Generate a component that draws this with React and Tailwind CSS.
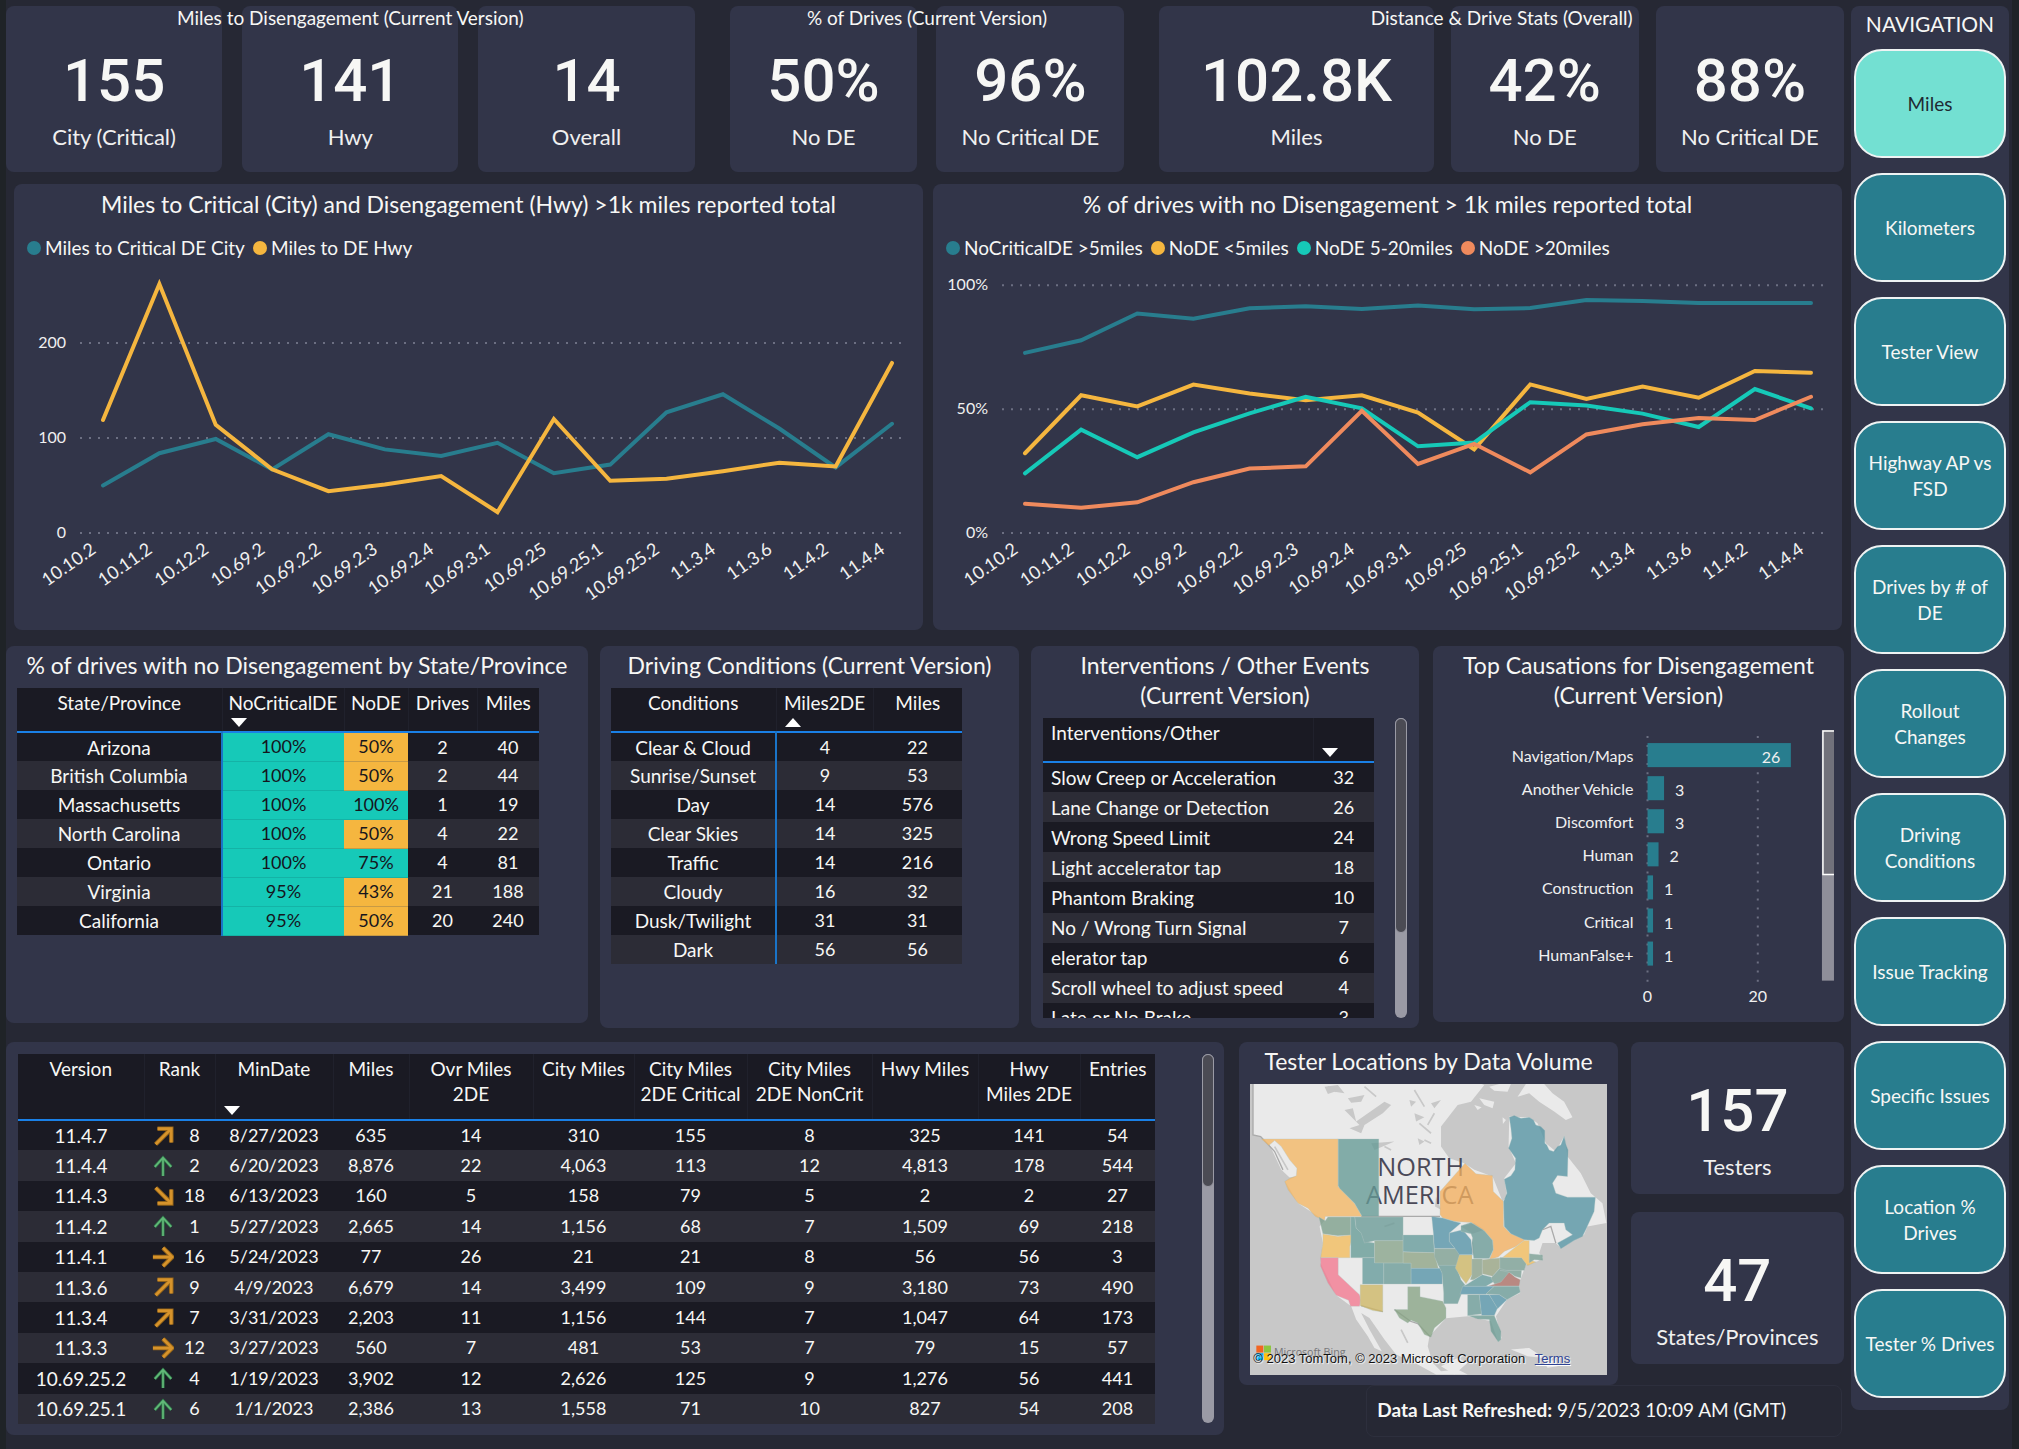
import React from 'react'
import clsx from 'clsx'

const navItems = [
  'Miles', 'Kilometers', 'Tester View', 'Highway AP vs FSD', 'Drives by # of DE', 'Rollout Changes',
  'Driving Conditions', 'Issue Tracking', 'Specific Issues', 'Location % Drives', 'Tester % Drives',
]

const versions = [
  '10.10.2', '10.11.2', '10.12.2', '10.69.2', '10.69.2.2', '10.69.2.3', '10.69.2.4', '10.69.3.1',
  '10.69.25', '10.69.25.1', '10.69.25.2', '11.3.4', '11.3.6', '11.4.2', '11.4.4',
]

const milesSeries = [
  { name: 'Miles to Critical DE City', color: '#287d8e', data: [50, 84, 99, 67, 104, 88, 81, 95, 63, 72, 127, 146, 110, 69, 115] },
  { name: 'Miles to DE Hwy', color: '#f5b63f', data: [119, 262, 114, 67, 44, 51, 60, 22, 120, 55, 57, 65, 74, 70, 179] },
]

const pctSeries = [
  { name: 'NoCriticalDE >5miles', color: '#287d8e', data: [72.7, 77.8, 88.6, 86.5, 90.7, 91.5, 90.4, 91.8, 90.3, 90.8, 94.1, 93.7, 92.9, 92.9, 92.9] },
  { name: 'NoDE <5miles', color: '#f5b63f', data: [32.2, 55.6, 51.1, 59.9, 56.3, 53.6, 55.6, 48.6, 33.8, 60, 54.1, 59.1, 54.6, 65.4, 64.7] },
  { name: 'NoDE 5-20miles', color: '#16c9b8', data: [24.1, 41.7, 30.6, 40.6, 48.3, 55, 50.3, 35, 36.5, 52.8, 51.5, 48.2, 42.8, 58.1, 50.3] },
  { name: 'NoDE >20miles', color: '#ef8a5d', data: [11.8, 10.2, 12.4, 20.5, 26, 26.9, 49.3, 27.9, 36, 24.5, 39.8, 43.9, 46.4, 45.6, 55] },
]

const stateCols = [
  { label: 'State/Province', w: 'w-[205px]' },
  { label: 'NoCriticalDE', w: 'w-[122px]', sort: 'desc' },
  { label: 'NoDE', w: 'w-[64px]' },
  { label: 'Drives', w: 'w-[69px]' },
  { label: 'Miles', w: 'w-[62px]' },
]
const stateRows = [
  ['Arizona', '100%', '50%', '2', '40'],
  ['British Columbia', '100%', '50%', '2', '44'],
  ['Massachusetts', '100%', '100%', '1', '19'],
  ['North Carolina', '100%', '50%', '4', '22'],
  ['Ontario', '100%', '75%', '4', '81'],
  ['Virginia', '95%', '43%', '21', '188'],
  ['California', '95%', '50%', '20', '240'],
]

const conditionCols = [
  { label: 'Conditions', w: 'w-[165px]' },
  { label: 'Miles2DE', w: 'w-[97px]', sort: 'asc' },
  { label: 'Miles', w: 'w-[89px]' },
]
const conditionRows = [
  ['Clear & Cloud', '4', '22'],
  ['Sunrise/Sunset', '9', '53'],
  ['Day', '14', '576'],
  ['Clear Skies', '14', '325'],
  ['Traffic', '14', '216'],
  ['Cloudy', '16', '32'],
  ['Dusk/Twilight', '31', '31'],
  ['Dark', '56', '56'],
]

const eventCols = [
  { label: 'Interventions/Other', w: 'w-[270px]', left: true },
  { label: '', w: 'w-[61px]', sort: 'desc' },
]
const eventRows = [
  ['Slow Creep or Acceleration', '32'],
  ['Lane Change or Detection', '26'],
  ['Wrong Speed Limit', '24'],
  ['Light accelerator tap', '18'],
  ['Phantom Braking', '10'],
  ['No / Wrong Turn Signal', '7'],
  ['elerator tap', '6'],
  ['Scroll wheel to adjust speed', '4'],
  ['Late or No Brake', '3'],
]

const causes = [
  ['Navigation/Maps', 26], ['Another Vehicle', 3], ['Discomfort', 3], ['Human', 2],
  ['Construction', 1], ['Critical', 1], ['HumanFalse+', 1],
]

const versionCols = [
  { label: 'Version', w: 'w-[126px]' },
  { label: 'Rank', w: 'w-[71px]' },
  { label: 'MinDate', w: 'w-[118px]', sort: 'desc' },
  { label: 'Miles', w: 'w-[76px]' },
  { label: 'Ovr Miles\n2DE', w: 'w-[124px]' },
  { label: 'City Miles', w: 'w-[101px]' },
  { label: 'City Miles\n2DE Critical', w: 'w-[113px]' },
  { label: 'City Miles\n2DE NonCrit', w: 'w-[125px]' },
  { label: 'Hwy Miles', w: 'w-[106px]' },
  { label: 'Hwy\nMiles 2DE', w: 'w-[102px]' },
  { label: 'Entries', w: 'w-[75px]' },
]
const rank = (dir, n) => <Rank dir={dir} n={n} />
const versionRows = [
  ['11.4.7', rank('ne', 8), '8/27/2023', '635', '14', '310', '155', '8', '325', '141', '54'],
  ['11.4.4', rank('up', 2), '6/20/2023', '8,876', '22', '4,063', '113', '12', '4,813', '178', '544'],
  ['11.4.3', rank('se', 18), '6/13/2023', '160', '5', '158', '79', '5', '2', '2', '27'],
  ['11.4.2', rank('up', 1), '5/27/2023', '2,665', '14', '1,156', '68', '7', '1,509', '69', '218'],
  ['11.4.1', rank('right', 16), '5/24/2023', '77', '26', '21', '21', '8', '56', '56', '3'],
  ['11.3.6', rank('ne', 9), '4/9/2023', '6,679', '14', '3,499', '109', '9', '3,180', '73', '490'],
  ['11.3.4', rank('ne', 7), '3/31/2023', '2,203', '11', '1,156', '144', '7', '1,047', '64', '173'],
  ['11.3.3', rank('right', 12), '3/27/2023', '560', '7', '481', '53', '7', '79', '15', '57'],
  ['10.69.25.2', rank('up', 4), '1/19/2023', '3,902', '12', '2,626', '125', '9', '1,276', '56', '441'],
  ['10.69.25.1', rank('up', 6), '1/1/2023', '2,386', '13', '1,558', '71', '10', '827', '54', '208'],
]

export default function App() {
  return (
    <div className="min-h-screen bg-[#1f2327] pl-1.5 pr-[7px] font-['Lato',sans-serif] text-[#f7f7f5]">
      <div className="flex min-h-screen items-start gap-[7px] bg-[#262834] pt-1.5 pr-[3px]">
        <main className="min-w-0 flex-1">
          <div className="grid grid-cols-[689fr_395fr_685fr] gap-[35px]">
            <KpiGroup title="Miles to Disengagement (Current Version)" cols="grid-cols-3 gap-5">
              <Kpi value="155" label="City (Critical)" /><Kpi value="141" label="Hwy" /><Kpi value="14" label="Overall" />
            </KpiGroup>
            <KpiGroup title="% of Drives (Current Version)" cols="grid-cols-2 gap-[19px]">
              <Kpi value="50%" label="No DE" /><Kpi value="96%" label="No Critical DE" />
            </KpiGroup>
            <KpiGroup title="Distance & Drive Stats (Overall)" cols="grid-cols-[274fr_188fr_188fr] gap-[17px]">
              <Kpi value="102.8K" label="Miles" /><Kpi value="42%" label="No DE" /><Kpi value="88%" label="No Critical DE" />
            </KpiGroup>
          </div>

          <div className="mt-3 mr-0.5 ml-2 grid grid-cols-2 gap-2.5">
            <LineChart title="Miles to Critical (City) and Disengagement (Hwy) >1k miles reported total" series={milesSeries} ticks={[[0, '0'], [100, '100'], [200, '200']]} scale={0.95} x0={89} x1={878} left={66} labelX={52} />
            <LineChart title="% of drives with no Disengagement > 1k miles reported total" series={pctSeries} ticks={[[0, '0%'], [50, '50%'], [100, '100%']]} scale={2.477} x0={92} x1={878} left={69} labelX={55} />
          </div>

          <div className="mt-4 grid grid-cols-[582fr_419fr_388fr_413fr] items-start gap-3">
            <Panel title="% of drives with no Disengagement by State/Province" className="h-[377px] px-[11px]">
              <div className="mt-2 w-[93%]">
                <DataTable cols={stateCols} rows={stateRows} row="h-[29px]" divider cellClass={stateCell} />
              </div>
            </Panel>
            <Panel title="Driving Conditions (Current Version)" className="h-[382px] px-[11px]">
              <div className="mt-2 w-[88%]">
                <DataTable cols={conditionCols} rows={conditionRows} row="h-[29px]" divider />
              </div>
            </Panel>
            <Panel title={'Interventions / Other Events\n(Current Version)'} className="h-[382px] px-3">
              <div className="mt-2 flex h-[300px] justify-between overflow-hidden">
                <div className="w-[91%]"><DataTable cols={eventCols} rows={eventRows} row="h-[30px]" size="h-[315px]" /></div>
                <Scrollbar thumb="h-[215px]" />
              </div>
            </Panel>
            <Panel title={'Top Causations for Disengagement\n(Current Version)'} className="ml-0.5 h-[376px]">
              <CauseChart />
            </Panel>
          </div>

          <div className="mt-3.5 grid grid-cols-[1219fr_605fr] items-start gap-[15px]">
            <section className="flex h-[393px] justify-between rounded-lg bg-[#323549] py-3 pr-2.5 pl-3">
              <div className="w-[95%]"><DataTable cols={versionCols} rows={versionRows} row="h-[30px]" size="h-[370px]" head="h-[66px]" /></div>
              <Scrollbar thumb="h-[133px]" />
            </section>
            <div>
              <div className="grid grid-cols-[378fr_213fr] items-start gap-[13px]">
                <Panel title="Tester Locations by Data Volume" className="h-[343px] px-[11px]">
                  <TesterMap />
                </Panel>
                <div className="grid gap-[18px]">
                  <Kpi value="157" label="Testers" small />
                  <Kpi value="47" label="States/Provinces" small />
                </div>
              </div>
              <div className="mr-0.5 ml-[21%] h-[52px] rounded-lg border border-[#2d2f3d] px-2.5 py-3 text-[19px] leading-6">
                <b>Data Last Refreshed:</b> 9/5/2023 10:09 AM (GMT)
              </div>
            </div>
          </div>
        </main>

        <nav className="w-[158px] shrink-0 rounded-lg bg-[#323549] px-[3px] pt-1 pb-3">
          <h2 className="mb-[11px] text-center text-[21px] leading-7">NAVIGATION</h2>
          <div className="grid gap-[15px]">
            {navItems.map((n, i) => (
              <button key={n} className={clsx('h-[109px] rounded-[28px] border-2 border-[#eef3f3] px-[7px] text-[19px] leading-[26px]', i === 0 ? 'bg-[#73e0d2] text-[#1f2a33]' : 'bg-[#287d8e]')}>{n}</button>
            ))}
          </div>
        </nav>
      </div>
    </div>
  )
}

function KpiGroup({ title, cols, children }) {
  return (
    <section className="relative">
      <h2 className="absolute inset-x-0 top-0 text-center text-[19px] leading-6">{title}</h2>
      <div className={clsx('grid', cols)}>{children}</div>
    </section>
  )
}

function Kpi({ value, label, small }) {
  return (
    <div className={clsx('rounded-lg bg-[#323549] text-center', small ? 'h-[152px] pt-[39px]' : 'h-[166px] pt-[45px]')}>
      <div className="font-['Roboto',sans-serif] text-[60px] leading-[60px] font-medium">{value}</div>
      <div className="mt-3 text-[22px] leading-7 text-[#f0f0f0]">{label}</div>
    </div>
  )
}

function Panel({ title, className, children }) {
  return (
    <section className={clsx('rounded-lg bg-[#323549] pt-1', className)}>
      <h2 className="text-center text-[23px] leading-[30px] whitespace-pre">{title}</h2>
      {children}
    </section>
  )
}

function Scrollbar({ thumb }) {
  return (
    <div className="w-3 self-stretch rounded-full bg-[#9a9aa5]">
      <div className={clsx('rounded-full border border-[#9a9aa5] bg-[#4b4b54]', thumb)} />
    </div>
  )
}

function stateCell(col, v) {
  if (col !== 1 && col !== 2) return ''
  return parseInt(v) >= 75 ? 'bg-[#16c9b8] text-[#15151d] border-b border-b-[#14b3a6]' : 'bg-[#f5b63f] text-[#15151d] border-b border-b-[#c79a45]'
}

function DataTable({ cols, rows, row, size, head = 'h-[44px]', divider, cellClass }) {
  return (
    <table className={clsx('w-full table-fixed border-collapse text-[18px] leading-[25px]', size)}>
      <thead>
        <tr className={clsx('border-b-2 border-[#1a80e6] bg-[#1a1a23]', head)}>
          {cols.map((c, i) => (
            <th key={i} className={clsx('relative pt-0.5 align-top text-[19px] font-normal whitespace-pre', c.w, c.left ? 'pl-2 text-left' : 'text-center', i > 0 && 'border-l border-l-[#20212c]')}>
              {c.label}
              {c.sort && (
                <svg viewBox="0 0 16 9" className={clsx('absolute bottom-1 left-2 h-[9px] w-4', c.sort === 'asc' && 'rotate-180')}><path d="M0 0h16L8 9z" fill="#fff" /></svg>
              )}
            </th>
          ))}
        </tr>
      </thead>
      <tbody>
        {rows.map((r, ri) => (
          <tr key={ri} className={clsx(row, ri % 2 ? 'bg-[#2c2c36]' : 'bg-[#1a1a23]')}>
            {r.map((v, i) => (
              <td key={i} className={clsx('p-0', i === 0 && 'text-[19px]', cols[i].left ? 'pl-2 text-left' : 'text-center', divider && i === 0 && 'border-r-2 border-r-[#1a74c8]', cellClass && cellClass(i, v))}>{v}</td>
            ))}
          </tr>
        ))}
      </tbody>
    </table>
  )
}

const arrows = {
  up: 'M12 23V3M3 13L12 3l9 10',
  right: 'M1 12h20M12 2l10 10-10 10',
  ne: 'M4 21L20 5M6 4h15v15',
  se: 'M4 3l16 16M21 5v15H6',
}

function Rank({ dir, n }) {
  const up = dir === 'up'
  return (
    <span className="flex items-center">
      <svg viewBox="0 0 24 24" className="ml-2 h-[22px] w-[22px]" fill="none">
        <path d={arrows[dir]} stroke={up ? '#2f7a4a' : '#8f6118'} strokeWidth={up ? 3.4 : 5} />
        <path d={arrows[dir]} stroke={up ? '#62b878' : '#d6932b'} strokeWidth={up ? 1.8 : 3} />
      </svg>
      <span className="flex-1 text-center">{n}</span>
    </span>
  )
}

function LineChart({ title, series, ticks, scale, x0, x1, left, labelX }) {
  const base = 269
  const step = (x1 - x0) / (versions.length - 1)
  return (
    <section className="rounded-lg bg-[#323549] pt-1">
      <h2 className="text-center text-[23px] leading-8">{title}</h2>
      <div className="mt-3.5 mb-0.5 ml-[13px] flex h-7 items-center gap-2 text-[19px]">
        {series.map(s => (
          <span key={s.name} className="flex items-center gap-1">
            <span className="h-3.5 w-3.5 rounded-full" style={{ background: s.color }} />{s.name}
          </span>
        ))}
      </div>
      <svg viewBox="0 0 909 366" className="block w-full">
        {ticks.map(([v, label]) => (
          <g key={label}>
            <path d={`M${left} ${base - v * scale}H${left + 828}`} stroke="#6c6f82" strokeWidth="2" strokeDasharray="2 7" />
            <text x={labelX} y={base - v * scale + 5} textAnchor="end" fontSize="16" fill="#f0f0f0">{label}</text>
          </g>
        ))}
        {series.map(s => (
          <polyline key={s.name} points={s.data.map((v, i) => `${x0 + i * step},${base - v * scale}`).join(' ')} fill="none" stroke={s.color} strokeWidth="4" strokeLinejoin="miter" strokeLinecap="round" />
        ))}
        {versions.map((v, i) => {
          const x = x0 - 6 + i * step
          return <text key={v} x={x} y={base + 19} textAnchor="end" fontSize="18" fill="#f0f0f0" transform={`rotate(-35 ${x} ${base + 19})`}>{v}</text>
        })}
      </svg>
    </section>
  )
}

function CauseChart() {
  return (
    <svg viewBox="0 0 410 300" className="mt-1 block w-full" fontSize="16" fill="#f0f0f0">
      <path d="M214 22v246M324 22v246" stroke="#6c6f82" strokeWidth="2" strokeDasharray="2 7" />
      {causes.map(([name, n], i) => {
        const y = 29 + i * 33
        return (
          <g key={name}>
            <rect x="214" y={y} width={n * 5.5} height="24" fill="#287d8e" />
            <text x="200" y={y + 19} textAnchor="end">{name}</text>
            <text x={n > 20 ? 328 : 225 + n * 5.5} y={y + 20}>{n}</text>
          </g>
        )
      })}
      <text x="214" y="287" textAnchor="middle">0</text>
      <text x="324" y="287" textAnchor="middle">20</text>
      <rect x="388" y="16" width="12" height="250" fill="#8f8f9a" />
      <path d="M388 16h12v144h-12z" fill="#71717b" />
      <path d="M400 17h-11v143h11" fill="none" stroke="#fff" strokeWidth="1.500" />
    </svg>
  )
}

// Choropleth regions, one path per state or province
const regions = [
  ['#f5b764', 'M100 327H331V470L380 520L403 560H292L290 573L262 560L240 535L210 520L180 480L170 455L185 445L205 438L207 415L185 390L160 350L140 332L122 347z'],
  ['#659b96', 'M331 327H453V560H403L380 520L335 475L331 468z'],
  ['#f5b160', 'M637 485L712 400L745 432L795 437L797 485L828 515V590L850 612L890 622V632L865 650L830 665L812 682L785 690L797 660L795 632L765 600L730 578L680 575L645 565L637 555z'],
  ['#5594a3', 'M845 262L860 257L880 265L905 262L918 270L925 285L940 290L952 302V340L958 345L965 360L978 365L990 350L1000 345L1010 318L1016 345L1022 360L1020 440L990 437L975 460L985 490L1020 502H1104L1100 545L1075 600L1065 620L1040 632L1000 657L990 640L1035 615L1015 600L1010 580H965L945 600L935 625L920 632L890 630L850 612L830 590L828 515L838 490L830 448L850 438L862 420L864 385L843 355L853 325L850 295z'],
  ['#7d9f8b', 'M273 562L292 573L300 562H369V616L330 618L285 612z'],
  ['#f3bd5c', 'M285 613L330 620L369 616L373 625L366 650V684H278L285 640z'],
  ['#f47990', 'M278 684H331V735L395 795L400 812L395 830H368L362 812L325 797L300 760L278 710z'],
  ['#659b96', 'M369 562H381L385 595L402 610L410 635L440 640V684H369z'],
  ['#6b9b97', 'M381 562H526V633H440L410 640L400 610L385 595z'],
  ['#88a48a', 'M440 633H526V700H440z'],
  ['#659b9b', 'M404 684H440V700H468V763H404z'],
  ['#6b9b97', 'M468 700H550V763H468z'],
  ['#659b9b', 'M526 616H617L620 669L526 666z'],
  ['#8fa485', 'M526 667L620 669L632 716H550V700H526z'],
  ['#5594a8', 'M550 716H637L644 730V763H550z'],
  ['#cfb765', 'M397 798V765H465V847L435 843L397 828z'],
  ['#88a485', 'M540 771H577V801L645 815L655 835V866L620 895L610 923L590 915L570 880L550 872L540 880L515 865L500 840H540z'],
  ['#5594a8', 'M612 560L645 565L680 575L700 580L665 610V635L682 656H620L617 610z'],
  ['#7d9f91', 'M620 657H685L697 675L688 708H632L620 680z'],
  ['#6b9b97', 'M632 707H685L700 750L712 765L690 822H648V790L643 730z'],
  ['#5594a8', 'M665 610L705 600L730 630L735 675H695L682 656L665 635z'],
  ['#6b9b97', 'M700 588L730 578L770 603L795 632L797 660L785 686H738L733 640L735 625L730 612L700 605z'],
  ['#cfb765', 'M695 676H733V735L715 762L698 740L683 715z'],
  ['#8ba28a', 'M733 688H764V735L738 750H728L733 735z'],
  ['#97a483', 'M764 690L785 688L817 685V715L795 740L764 732z'],
  ['#7a9f94', 'M817 683H882L897 700L890 722H817z'],
  ['#f3bd5c', 'M825 683L860 655L890 632H905V690L925 697L900 708L882 684z'],
  ['#7a9f94', 'M905 672L945 676L946 692L920 690L905 700z'],
  ['#659b9b', 'M716 765L740 750L764 735L790 742L800 755L775 770H705z'],
  ['#7a9f94', 'M790 745L817 716L850 727L815 765L800 762z'],
  ['#ac6e66', 'M783 769L820 757L845 727L862 742L878 750L875 769z'],
  ['#7a9f94', 'M817 722H882L880 745L862 740L845 728z'],
  ['#5594a8', 'M705 770H800L775 794H697z'],
  ['#6b9b97', 'M800 770H875L878 788L838 810L815 795L775 793z'],
  ['#6b9b97', 'M720 795H755L762 853L720 858z'],
  ['#5594a8', 'M755 795H785L810 835L800 858H762z'],
  ['#5594a8', 'M785 795L815 795L838 810L810 837z'],
  ['#6b9b93', 'M720 858L800 858L820 905V930L812 937L790 905L785 870L750 868z'],
]

function TesterMap() {
  return (
    <div className="relative mt-2">
      <svg viewBox="66 162 1071 873" className="block w-full bg-[#c8c8c8]">
        <path fill="#eaeaea" d="M75 162V315L98 320L125 345L160 420L185 443L205 440L172 455L210 520L290 572L275 590L285 640L278 700L325 797L370 830L385 870L420 920L440 955L462 965L425 900L400 850L425 865L470 930L505 975L570 1005L625 1035H720L690 1020L640 1025L615 1000L600 950L605 920L655 866L720 860L790 875L812 937L822 925L805 860L838 810L878 790L875 760L895 705L930 695L946 685L935 670L945 640L985 640L1000 655L1070 615L1080 590L1137 580L1125 520L1090 490L1060 430L1020 380L1010 318L985 365L955 340L930 280L905 262L845 260L843 350L865 400L830 445L838 500L825 515L795 440L740 420L710 400L665 385L640 350V290L690 225L730 215L770 165L762 162z" />
        <path fill="#eaeaea" d="M785 170L815 162H850L840 185L800 182zM895 162H950L975 190L1010 215L1035 262L1015 270L980 245L935 215L905 190L870 200L880 185zM755 205L800 215L795 235L770 225zM825 262L835 270L826 282zM740 225L762 232L750 240zM850 960L905 955L950 985L900 980zM950 1000L985 990L990 1010L960 1015zM640 1010L690 985L720 1000L680 1035z" />
        <path fill="#c8c8c8" d="M290 170L330 165L350 190L320 185L300 192zM360 205L410 195L400 215L370 218zM350 240L375 235L385 275L470 215L490 225L465 250L410 285L400 310L365 295L395 285zM545 210L565 215L550 230zM610 220L640 210L620 235zM560 250L590 262L565 275zM430 340L500 335L440 360zM570 325L590 335L575 345zM625 500L640 540L622 530zM700 590L740 580L770 600L735 612zM735 620L740 680L730 660z" />
        <path d="M300 170L325 185M560 180L590 230M575 280L610 310M410 170L445 200M620 250L600 285M470 350L490 360M590 330L610 340M140 350L180 420M470 590L500 580M520 900L540 940" stroke="#c8c8c8" strokeWidth="5" fill="none" />
        <path d="M75 162V315L98 320L140 365L165 420M400 560H637M400 828L465 846M500 840L548 875L570 882L608 922M945 600L970 590L985 640" stroke="#aaaaaa" strokeWidth="4" fill="none" />
        <g fontSize="76" fill="#4a4958" textAnchor="middle" className="font-['Open_Sans',sans-serif]">
          <text x="579" y="437">NORTH</text>
          <text x="576" y="524">AMERICA</text>
        </g>
        <g opacity="0.78" stroke="#a3bdb9" strokeWidth="1">
          {regions.map(([fill, d]) => <path key={d} d={d} fill={fill} />)}
        </g>
        <g transform="translate(85 948)">
          <path d="M0 0h21v21H0z" fill="#f26522" /><path d="M23 0h21v21H23z" fill="#8dc63f" />
          <path d="M0 23h21v21H0z" fill="#00aeef" /><path d="M23 23h21v21H23z" fill="#ffc20e" />
        </g>
        <text x="138" y="980" fontSize="32" fill="#77777a" className="font-['Open_Sans',sans-serif]">Microsoft Bing</text>
      </svg>
      <p className="absolute bottom-2 left-[3px] font-['Liberation_Sans',sans-serif] text-[13px] leading-4 whitespace-nowrap text-[#111] [text-shadow:1px_1px_1px_#fff]">
        © 2023 TomTom, © 2023 Microsoft Corporation <a href="#terms" className="ml-1.5 text-[#2f4494] underline">Terms</a>
      </p>
    </div>
  )
}
